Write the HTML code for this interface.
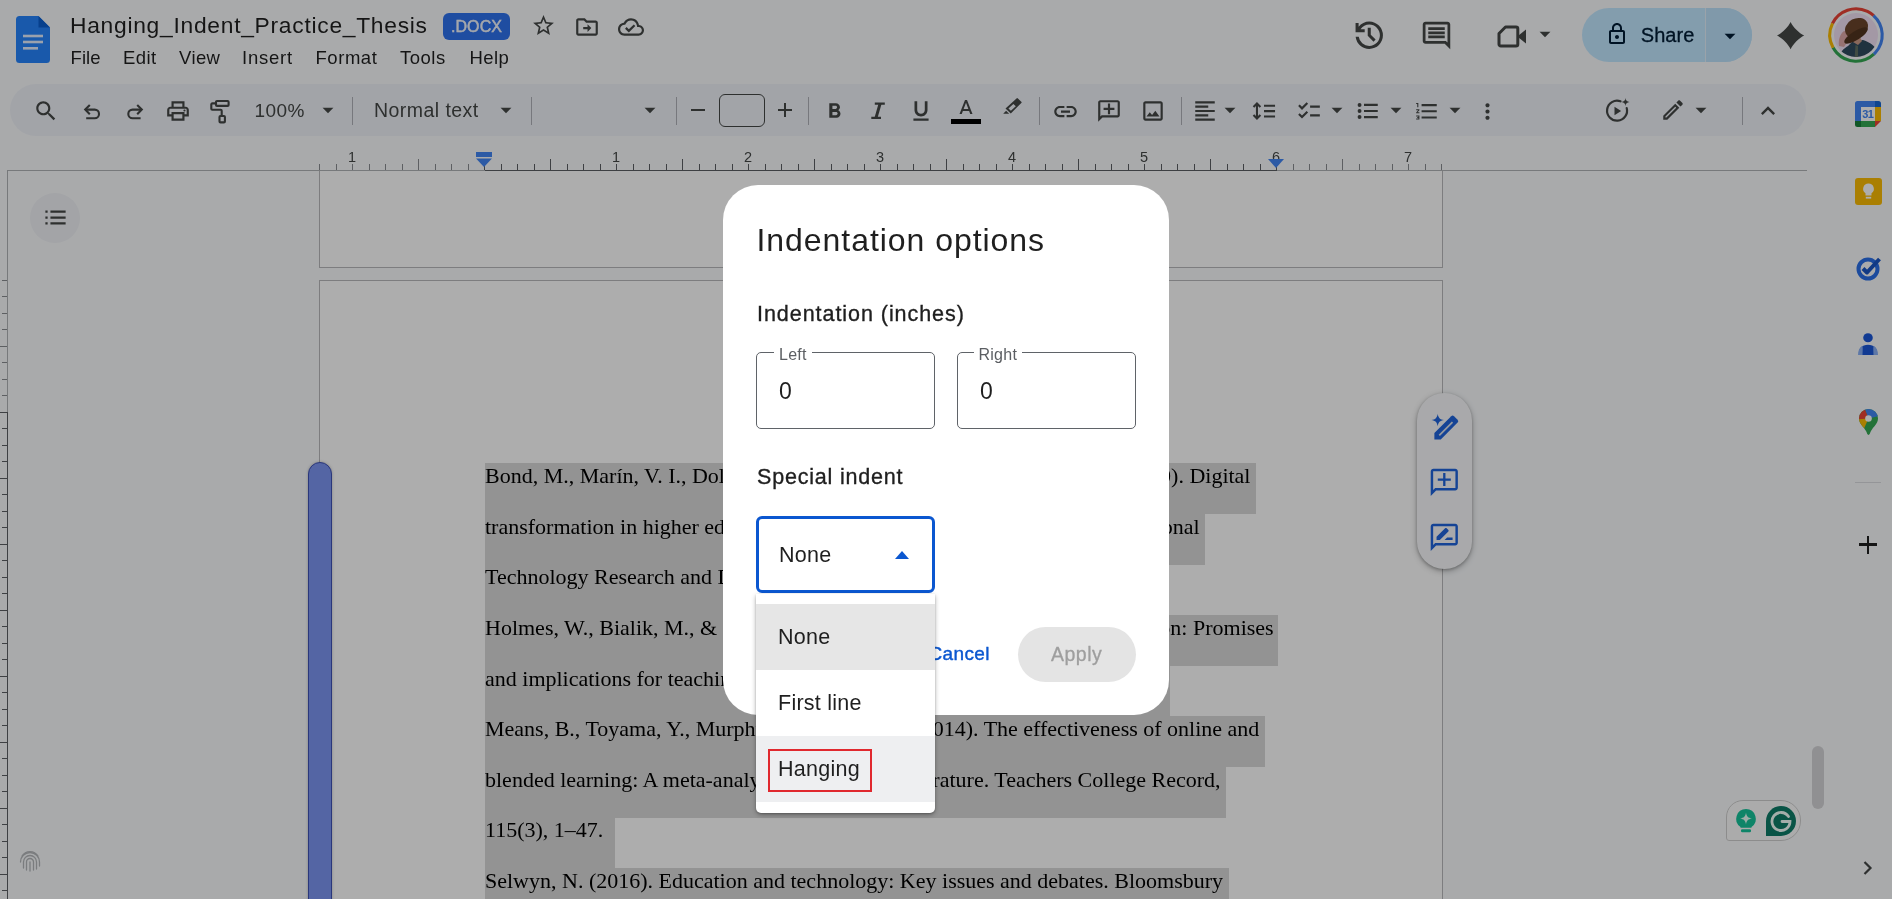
<!DOCTYPE html>
<html lang="en">
<head>
<meta charset="utf-8">
<title>Hanging_Indent_Practice_Thesis - Google Docs</title>
<style>
*{box-sizing:border-box;margin:0;padding:0}
html,body{width:1892px;height:899px;overflow:hidden}
body{position:relative;background:#f9fbfd;font-family:"Liberation Sans",sans-serif;color:#1f1f1f}
.abs{position:absolute}
svg{position:absolute;display:block;overflow:visible}
.ic{fill:#444746}
/* header */
#title{left:70px;top:10px;font-size:22.8px;line-height:30px;white-space:nowrap;color:#1f1f1f;letter-spacing:0.73px}
.menu{top:45.500px;font-size:18.5px;line-height:24px;white-space:nowrap;color:#1f1f1f;letter-spacing:0.4px}
#docx{left:443px;top:13px;width:67px;height:27px;border-radius:6px;background:#2f72ee;color:#f4f7fd;font-size:16px;-webkit-text-stroke:0.45px #f4f7fd;line-height:27px;text-align:center;letter-spacing:0.1px}
#share{left:1582px;top:8px;width:170px;height:54px;border-radius:27px;background:#c2e7ff;overflow:hidden}
#share .div{left:123px;top:0;width:1.300px;height:54px;background:#e4f1fb}
#share .r{left:124px;top:0;width:46px;height:54px;background:#bde2fb}
#share .t{left:58.700px;top:13.800px;font-size:20px;line-height:26px;color:#001d35;-webkit-text-stroke:0.3px #001d35;letter-spacing:0.1px}
/* toolbar */
#tb{left:10px;top:84px;width:1796px;height:52px;border-radius:26px;background:#eff2f8}
.sep{top:97px;width:1px;height:28px;background:#b0b2b8}
.tbt{top:97px;font-size:18.2px;line-height:24px;color:#444746;white-space:nowrap}
#fs{left:719px;top:94px;width:46px;height:33px;border:1.3px solid #444746;border-radius:6px}
/* rulers */
.rnum{top:148.500px;width:20px;text-align:center;font-size:14.500px;line-height:16px;color:#444746}
/* doc */
.page{background:#fff;border:1px solid #b9b9bc}
.hl{background:#d9d9d9}
.ln{font-family:"Liberation Serif",serif;font-size:22px;line-height:26px;color:#000;white-space:nowrap}
/* scrim */
#scrim{left:0;top:0;width:1892px;height:899px;background:rgba(0,0,0,0.32)}
/* dialog */
#dlg{left:723px;top:185px;width:446px;height:530px;border-radius:35px;background:#fff}
#dlg .h1{left:33.500px;top:34.800px;font-size:32px;line-height:40px;color:#1f1f1f;white-space:nowrap;letter-spacing:0.95px}
#dlg .h2{letter-spacing:0.95px;font-size:21.5px;line-height:26px;color:#1f1f1f;white-space:nowrap;-webkit-text-stroke:0.35px #1f1f1f}
.fld{width:179px;height:77px;border:1px solid #5f6368;border-radius:5px}
.fld .lb{top:-7.500px;left:17px;padding:0 5px;background:#fff;letter-spacing:0.25px;font-size:16px;line-height:18px;color:#5b5e62}
.fld .v{left:22px;top:26px;font-size:23px;line-height:24px;color:#1f1f1f}
#sel{left:33px;top:331px;width:179px;height:77px;border:3px solid #0b57d0;border-radius:6px}
.opt{font-size:21.5px;line-height:26px;color:#1f1f1f;white-space:nowrap;letter-spacing:0.25px}
#menu{left:756px;top:594px;width:179px;height:219px;background:#fff;border-radius:0 0 5px 5px;box-shadow:0 2px 5px rgba(0,0,0,.3),0 1px 2px rgba(0,0,0,.2)}
</style>
</head>
<body>
<div id="root" style="position:absolute;left:0;top:0;width:1892px;height:899px;will-change:transform">

<!-- ================= HEADER ================= -->
<div id="hdr">
  <div class="abs" id="title">Hanging_Indent_Practice_Thesis</div>
  <div class="abs" id="docx">.DOCX</div>
  <div class="abs menu" style="left:70.500px;letter-spacing:0.1px">File</div>
  <div class="abs menu" style="left:123px">Edit</div>
  <div class="abs menu" style="left:179px">View</div>
  <div class="abs menu" style="left:242px;letter-spacing:0.75px">Insert</div>
  <div class="abs menu" style="left:315.500px;letter-spacing:0.55px">Format</div>
  <div class="abs menu" style="left:400px;letter-spacing:0.5px">Tools</div>
  <div class="abs menu" style="left:469.500px">Help</div>
  
  <!-- docs logo -->
  <svg style="left:16px;top:16px" width="34" height="47" viewBox="0 0 34 47"><path d="M3.500 0H22.500l11.500 11.500v32a3.500 3.500 0 0 1-3.500 3.500h-27A3.500 3.500 0 0 1 0 43.500V3.500A3.500 3.500 0 0 1 3.500 0z" fill="#2684fc"/><path d="M22.500 0l11.500 11.500H22.500z" fill="#0b5fd0"/><rect x="7" y="18.700" width="20" height="2.600" fill="#e3eeff"/><rect x="7" y="24.700" width="20" height="2.600" fill="#e3eeff"/><rect x="7" y="31" width="15" height="2.600" fill="#e3eeff"/></svg>
  <!-- star -->
  <svg class="ic" style="left:530.500px;top:13px" width="25" height="25" viewBox="0 0 24 24"><path d="M22 9.240l-7.190-.620L12 2 9.190 8.630 2 9.240l5.460 4.730L5.820 21 12 17.270 18.180 21l-1.630-7.030L22 9.240zM12 15.400l-3.760 2.270 1-4.280-3.320-2.880 4.380-.380L12 6.100l1.710 4.040 4.380.380-3.320 2.880 1 4.280L12 15.400z"/></svg>
  <!-- move to folder -->
  <svg class="ic" style="left:574px;top:14px" width="26" height="26" viewBox="0 0 24 24"><path d="M20 6h-8l-2-2H4c-1.100 0-2 .900-2 2v12c0 1.100.900 2 2 2h16c1.100 0 2-.900 2-2V8c0-1.100-.900-2-2-2zm0 12H4V6h5.170l2 2H20v10zm-7.500-1.500l3.500-3.500-3.500-3.500v2.500H8.500v2h4v2.500z"/></svg>
  <!-- cloud done -->
  <svg class="ic" style="left:617.500px;top:13.500px" width="26" height="26" viewBox="0 0 24 24"><path d="M19.350 10.040C18.670 6.590 15.640 4 12 4 9.110 4 6.600 5.640 5.350 8.040 2.340 8.360 0 10.910 0 14c0 3.310 2.690 6 6 6h13c2.760 0 5-2.240 5-5 0-2.640-2.050-4.780-4.650-4.960zM19 18H6c-2.210 0-4-1.790-4-4 0-2.050 1.530-3.760 3.560-3.970l1.070-.110.500-.950C8.080 7.140 9.940 6 12 6c2.620 0 4.880 1.860 5.390 4.430l.300 1.500 1.530.110c1.560.100 2.780 1.410 2.780 2.960 0 1.650-1.350 3-3 3zm-9-3.820l-2.090-2.090L6.500 13.500 10 17l6.010-6.010-1.410-1.410z"/></svg>
  <!-- history -->
  <svg class="ic" style="left:1351.250px;top:16.850px" width="36.500" height="36.500" viewBox="0 -960 960 960"><path d="M480-120q-138 0-240.500-91.500T122-440h82q14 104 92.500 172T480-200q117 0 198.500-81.500T760-480q0-117-81.500-198.500T480-760q-69 0-129 32t-101 88h110v80H120v-240h80v94q51-64 124.500-99T480-840q75 0 140.500 28.500t114 77q48.500 48.500 77 114T840-480q0 75-28.500 140.500t-77 114q-48.500 48.500-114 77T480-120Zm112-192L440-464v-216h80v184l128 128-56 56Z"/></svg>
  <!-- comments -->
  <svg class="ic" style="left:1420px;top:19px" width="33" height="33" viewBox="0 0 24 24"><path d="M21.990 4c0-1.100-.890-2-1.990-2H4c-1.100 0-2 .900-2 2v12c0 1.100.900 2 2 2h14l4 4-.010-18zM20 4v13.170L18.830 16H4V4h16zM6 12h12v2H6zm0-3h12v2H6zm0-3h12v2H6z"/></svg>
  <!-- meet camera -->
  <svg style="left:1496.500px;top:24.500px" width="30" height="23" viewBox="0 0 30 23"><path d="M8.500 2H19a1.800 1.800 0 0 1 1.800 1.800v15.400A1.800 1.800 0 0 1 19 21H3.800A1.800 1.800 0 0 1 2 19.200V8.500z" fill="none" stroke="#444746" stroke-width="3" stroke-linejoin="round"/><path d="M21.500 10.500l7.500-6v14l-7.500-6z" fill="#444746"/></svg>
  <svg class="ic" style="left:1532px;top:21px" width="26" height="26" viewBox="0 0 24 24"><path d="M7 10l5 5 5-5z"/></svg>
  <!-- gemini spark -->
  <svg style="left:1776.700px;top:21.800px" width="27.200" height="27.200" viewBox="0 0 28 28"><path d="M14 0C16.500 5.200 22.800 11.500 28 14 22.800 16.500 16.500 22.800 14 28 11.500 22.800 5.200 16.500 0 14 5.200 11.500 11.500 5.200 14 0z" fill="#444746"/></svg>
  <!-- avatar -->
  <svg style="left:1828.300px;top:7.400px" width="56" height="56" viewBox="0 0 56 56">
    <g fill="none" stroke-width="3.100">
    <circle cx="28" cy="28" r="26.200" stroke="#ea4335" stroke-dasharray="48.500 200" transform="rotate(206 28 28)"/>
    <circle cx="28" cy="28" r="26.200" stroke="#4285f4" stroke-dasharray="43.400 200" transform="rotate(-48 28 28)"/>
    <circle cx="28" cy="28" r="26.200" stroke="#34a853" stroke-dasharray="47.500 200" transform="rotate(47 28 28)"/>
    <circle cx="28" cy="28" r="26.200" stroke="#fbbc04" stroke-dasharray="25.100 200" transform="rotate(151 28 28)"/>
    </g>
    <clipPath id="avc"><circle cx="28" cy="28" r="22"/></clipPath>
    <g clip-path="url(#avc)">
      <rect x="0" y="0" width="56" height="56" fill="#f0e0f4"/>
      <path d="M11 52c0-6 4-10 9-13l5-5 10-1c6 2 11 5 13 9v12z" fill="#2f4a5e"/>
      <path d="M25 35l5 3 4-4-2-4-6 1z" fill="#c99a86"/>
      <path d="M27.500 38l2.500 1v14h-3.500z" fill="#5f6f62"/>
      <path d="M11 39c-1-6 1-12 5-15l4 1 2 6c-2 3-4 6-6 9z" fill="#dfa9a8"/>
      <ellipse cx="28.500" cy="21" rx="12" ry="9.500" transform="rotate(-28 28.500 21)" fill="#6a452b"/>
      <ellipse cx="28" cy="28.500" rx="13.500" ry="4.500" transform="rotate(-32 28 28.500)" fill="#52341f"/>
    </g>
  </svg>

  <div class="abs" id="share">
    <div class="abs r"></div><div class="abs div"></div>
    <div class="abs t">Share</div>
    
    <svg style="left:23px;top:14.300px" width="24" height="24" viewBox="0 0 24 24"><path fill="#001d35" d="M18 8h-1V6c0-2.760-2.240-5-5-5S7 3.240 7 6v2H6c-1.100 0-2 .900-2 2v10c0 1.100.900 2 2 2h12c1.100 0 2-.900 2-2V10c0-1.100-.900-2-2-2zM9 6c0-1.660 1.340-3 3-3s3 1.340 3 3v2H9V6zm9 14H6V10h12v10zm-6-3c1.100 0 2-.900 2-2s-.900-2-2-2-2 .900-2 2 .900 2 2 2z"/></svg>
    <svg style="left:135px;top:15px" width="26" height="26" viewBox="0 0 24 24"><path fill="#001d35" d="M7 10l5 5 5-5z"/></svg>

  </div>
</div>

<!-- ================= TOOLBAR ================= -->
<div class="abs" id="tb"></div>
<div class="abs tbt" style="left:254.500px;top:99px;font-size:19px;letter-spacing:0.4px">100%</div>
<div class="abs tbt" style="left:374px;top:97.500px;font-size:19.500px;letter-spacing:0.45px">Normal text</div>
<div class="abs sep" style="left:352px"></div>
<div class="abs sep" style="left:531px"></div>
<div class="abs sep" style="left:676px"></div>
<div class="abs sep" style="left:808px"></div>
<div class="abs sep" style="left:1039px"></div>
<div class="abs sep" style="left:1181px"></div>
<div class="abs sep" style="left:1742px"></div>
<div class="abs" id="fs"></div>
<svg class="ic" style="left:32.500px;top:98px" width="26" height="26" viewBox="0 0 24 24"><path d="M15.500 14h-.790l-.280-.270C15.410 12.590 16 11.110 16 9.500 16 5.910 13.090 3 9.500 3S3 5.910 3 9.500 5.910 16 9.500 16c1.610 0 3.090-.590 4.230-1.570l.270.280v.790l5 4.990L20.490 19l-4.990-5zm-6 0C7.010 14 5 11.990 5 9.500S7.010 5 9.500 5 14 7.010 14 9.500 11.990 14 9.500 14z"/></svg>
<svg style="left:81px;top:101px" width="22" height="22" viewBox="0 0 22 22"><path d="M4.300 8.600H13.700a4.300 4.300 0 0 1 0 8.600H5.200" fill="none" stroke="#444746" stroke-width="2.100"/><path d="M8.800 3.900L4.200 8.600l4.600 4.700" fill="none" stroke="#444746" stroke-width="2.100"/></svg>
<svg style="left:124px;top:101px" width="22" height="22" viewBox="0 0 22 22"><path d="M17.700 8.600H8.600a4.300 4.300 0 0 0 0 8.600H16.600" fill="none" stroke="#444746" stroke-width="2.100"/><path d="M13.200 3.900l4.600 4.700-4.600 4.700" fill="none" stroke="#444746" stroke-width="2.100"/></svg>
<svg class="ic" style="left:165px;top:98px" width="26" height="26" viewBox="0 0 24 24"><circle cx="18" cy="11.500" r="1"/><path d="M19 8h-1V3H6v5H5c-1.660 0-3 1.340-3 3v6h4v4h12v-4h4v-6c0-1.660-1.340-3-3-3zM8 5h8v3H8V5zm8 14H8v-4h8v4zm4-4h-2v-2H6v2H4v-4c0-.550.450-1 1-1h14c.550 0 1 .450 1 1v4z"/></svg>
<svg style="left:208px;top:98px" width="24" height="27" viewBox="0 0 24 27" fill="none" stroke="#444746" stroke-width="2.100" stroke-linejoin="round"><rect x="8" y="3" width="12.600" height="4.900" rx="1"/><path d="M8 5.400H4.300a1 1 0 0 0-1 1v4.300a1 1 0 0 0 1 1h8.400a1 1 0 0 1 1 1V17.500"/><rect x="11.500" y="18" width="5.400" height="6.400" rx="1"/></svg>
<svg class="ic" style="left:315px;top:97px" width="26" height="26" viewBox="0 0 24 24"><path d="M7 10l5 5 5-5z"/></svg>
<svg class="ic" style="left:493px;top:97px" width="26" height="26" viewBox="0 0 24 24"><path d="M7 10l5 5 5-5z"/></svg>
<svg class="ic" style="left:637px;top:97px" width="26" height="26" viewBox="0 0 24 24"><path d="M7 10l5 5 5-5z"/></svg>
<div class="abs" style="left:691px;top:109px;width:14px;height:2px;background:#444746"></div>
<div class="abs" style="left:778px;top:109px;width:14px;height:2px;background:#444746"></div><div class="abs" style="left:784px;top:103px;width:2px;height:14px;background:#444746"></div>
<svg class="ic" style="left:821.700px;top:98.800px" width="25" height="25" viewBox="0 0 24 24"><path d="M15.600 10.790c.970-.670 1.650-1.770 1.650-2.790 0-2.260-1.750-4-4-4H7v14h7.040c2.090 0 3.710-1.700 3.710-3.790 0-1.520-.860-2.820-2.150-3.420zM10 6.500h3c.830 0 1.500.670 1.500 1.500s-.670 1.500-1.500 1.500h-3v-3zm3.500 9H10v-3h3.500c.830 0 1.500.670 1.500 1.500s-.670 1.500-1.500 1.500z"/></svg>
<svg style="left:868px;top:100px" width="20" height="22" viewBox="0 0 20 22" fill="none" stroke="#444746" stroke-width="2.300"><path d="M6.800 3.600H16.800M3.300 17.900H13"/><path d="M12.100 3.600L8 17.900" stroke-width="3"/></svg>
<svg class="ic" style="left:908px;top:97.500px" width="26" height="26" viewBox="0 0 24 24"><path d="M12 17c3.310 0 6-2.690 6-6V3h-2.500v8c0 1.930-1.570 3.500-3.500 3.500S8.500 12.930 8.500 11V3H6v8c0 3.310 2.690 6 6 6zm-7 2v2h14v-2H5z"/></svg>
<svg class="ic" style="left:954px;top:96.500px" width="24" height="24" viewBox="0 0 24 24"><path d="M11 3L5.500 17h2.250l1.120-3h6.250l1.120 3h2.250L13 3h-2zm-1.380 9L12 5.670 14.380 12H9.620z"/></svg>
<div class="abs" style="left:951px;top:119px;width:30px;height:5px;background:#000"></div>
<svg class="ic" style="left:1001px;top:96px" width="24" height="22" viewBox="0 0 24 22"><path fill-rule="evenodd" d="M4.500 12.500L15.500 2.400a1 1 0 0 1 1.400 0l3.400 3.300a1 1 0 0 1 0 1.400L9.800 17.500zM7.450 12.460L12.370 7.960l2.440 2.300L9.890 14.760z"/><path d="M5.100 14.700L2.200 17.800h6z"/></svg>
<svg class="ic" style="left:1052px;top:97.5px" width="27" height="27" viewBox="0 0 24 24"><path d="M3.900 12c0-1.710 1.390-3.100 3.100-3.100h4V7H7c-2.760 0-5 2.240-5 5s2.240 5 5 5h4v-1.900H7c-1.710 0-3.100-1.390-3.100-3.100zM8 13h8v-2H8v2zm9-6h-4v1.900h4c1.710 0 3.100 1.390 3.100 3.100s-1.390 3.100-3.100 3.100h-4V17h4c2.760 0 5-2.240 5-5s-2.240-5-5-5z"/></svg>
<svg class="ic" style="left:1096px;top:98px" width="26" height="26" viewBox="0 0 24 24"><g transform="translate(24 0) scale(-1 1)"><path d="M22 4c0-1.100-.900-2-2-2H4c-1.100 0-2 .900-2 2v12c0 1.100.900 2 2 2h14l4 4V4zm-2 13.170L18.830 16H4V4h16v13.170zM13 5h-2v4H7v2h4v4h2v-4h4V9h-4z"/></g></svg>
<svg class="ic" style="left:1140px;top:98px" width="26" height="26" viewBox="0 0 24 24"><path d="M19 5v14H5V5h14m0-2H5c-1.100 0-2 .900-2 2v14c0 1.100.900 2 2 2h14c1.100 0 2-.900 2-2V5c0-1.100-.900-2-2-2zm-4.860 8.860l-3 3.870L9 13.140 6 17h12l-3.860-5.140z"/></svg>
<svg class="ic" style="left:1192px;top:98px" width="26" height="26" viewBox="0 0 24 24"><path d="M15 15H3v2h12v-2zm0-8H3v2h12V7zM3 13h18v-2H3v2zm0 8h18v-2H3v2zM3 3v2h18V3H3z"/></svg>
<svg class="ic" style="left:1217px;top:97px" width="26" height="26" viewBox="0 0 24 24"><path d="M7 10l5 5 5-5z"/></svg>
<svg style="left:1251px;top:98px" width="26" height="26" viewBox="0 0 24 24" fill="none" stroke="#444746" stroke-width="1.900"><path d="M5.500 5.200v13.600M2.300 8.300L5.500 5.100l3.200 3.200M2.300 15.700l3.200 3.200 3.200-3.200M12 7.200h10.200M12 12.100h10.200M12 17h10.200"/></svg>
<svg class="ic" style="left:1296px;top:98px" width="26" height="26" viewBox="0 0 24 24"><path d="M22 7h-9v2h9V7zm0 8h-9v2h9v-2zM5.540 11L2 7.460l1.410-1.410 2.120 2.120 4.240-4.240 1.410 1.410L5.540 11zm0 8L2 15.460l1.410-1.410 2.120 2.120 4.240-4.240 1.410 1.410L5.540 19z"/></svg>
<svg class="ic" style="left:1324px;top:97px" width="26" height="26" viewBox="0 0 24 24"><path d="M7 10l5 5 5-5z"/></svg>
<svg class="ic" style="left:1354.500px;top:98px" width="26" height="26" viewBox="0 0 24 24"><circle cx="4.200" cy="6.400" r="1.800"/><circle cx="4.200" cy="12" r="1.800"/><circle cx="4.200" cy="17.600" r="1.800"/><path d="M8.300 5.400H21v2H8.300zM8.300 11H21v2H8.300zM8.300 16.600H21v2H8.300z"/></svg>
<svg class="ic" style="left:1383px;top:97px" width="26" height="26" viewBox="0 0 24 24"><path d="M7 10l5 5 5-5z"/></svg>
<svg class="ic" style="left:1414px;top:98.700px" width="26" height="24.600" viewBox="0 0 24 24" preserveAspectRatio="none"><path d="M2 17h2v.500H3v1h1v.500H2v1h3v-4H2v1zm1-9h1V4H2v1h1v3zm-1 3h1.800L2 13.100v.900h3v-1H3.200L5 10.900V10H2v1zm5-6v2h14V5H7zm0 14h14v-2H7v2zm0-6h14v-2H7v2z"/></svg>
<svg class="ic" style="left:1442px;top:97px" width="26" height="26" viewBox="0 0 24 24"><path d="M7 10l5 5 5-5z"/></svg>
<svg class="ic" style="left:1474.5px;top:98.5px" width="25" height="25" viewBox="0 0 24 24"><path d="M12 8c1.100 0 2-.900 2-2s-.900-2-2-2-2 .900-2 2 .900 2 2 2zm0 2c-1.100 0-2 .900-2 2s.900 2 2 2 2-.900 2-2-.900-2-2-2zm0 6c-1.100 0-2 .900-2 2s.900 2 2 2 2-.900 2-2-.900-2-2-2z"/></svg>
<svg style="left:1605px;top:98px" width="26" height="25" viewBox="0 0 26 25"><path d="M15.500 3.300A10 10 0 1 0 21.700 10" fill="none" stroke="#444746" stroke-width="2.200" stroke-linecap="round"/><path d="M9.500 8.800v8.400l6.600-4.200z" fill="#444746"/><path d="M20.500 0c.300 2.600 1.400 3.700 4 4-2.600.300-3.700 1.400-4 4-.300-2.600-1.400-3.700-4-4 2.600-.300 3.700-1.400 4-4z" fill="#444746"/></svg>
<svg class="ic" style="left:1660px;top:97px" width="26" height="26" viewBox="0 0 24 24"><path d="M14.060 9.020l.920.920L5.920 19H5v-.920l9.060-9.060M17.660 3c-.250 0-.510.100-.700.290l-1.830 1.830 3.750 3.750 1.830-1.830c.390-.390.390-1.020 0-1.410l-2.340-2.340c-.200-.200-.450-.290-.710-.290zm-3.600 3.190L3 17.250V21h3.750L17.810 9.940l-3.750-3.750z"/></svg>
<svg class="ic" style="left:1688px;top:97px" width="26" height="26" viewBox="0 0 24 24"><path d="M7 10l5 5 5-5z"/></svg>
<svg class="ic" style="left:1754px;top:97px" width="28" height="28" viewBox="0 0 24 24"><path d="M12 8l-6 6 1.410 1.410L12 10.830l4.590 4.580L18 14z"/></svg>


<!-- ================= RULERS ================= -->
<svg style="left:0;top:140px" width="1892" height="760" viewBox="0 140 1892 760" shape-rendering="crispEdges">
<rect x="7" y="170" width="1800" height="1" fill="#b0b3b6"/>
<rect x="484.5" y="170" width="792" height="1" fill="#5c5f63"/>
<rect x="319" y="164" width="1" height="6" fill="#8a8d91"/><rect x="335.5" y="164" width="1" height="6" fill="#8a8d91"/><rect x="352" y="164" width="1" height="6" fill="#8a8d91"/><rect x="368.5" y="164" width="1" height="6" fill="#8a8d91"/><rect x="385" y="164" width="1" height="6" fill="#8a8d91"/><rect x="401.5" y="164" width="1" height="6" fill="#8a8d91"/><rect x="418" y="158.5" width="1" height="11.5" fill="#8a8d91"/><rect x="434.5" y="164" width="1" height="6" fill="#8a8d91"/><rect x="451" y="164" width="1" height="6" fill="#8a8d91"/><rect x="467.5" y="164" width="1" height="6" fill="#8a8d91"/><rect x="484" y="164" width="1" height="6" fill="#5c5f63"/><rect x="500.5" y="164" width="1" height="6" fill="#5c5f63"/><rect x="517" y="164" width="1" height="6" fill="#5c5f63"/><rect x="533.5" y="164" width="1" height="6" fill="#5c5f63"/><rect x="550" y="158.5" width="1" height="11.5" fill="#5c5f63"/><rect x="566.5" y="164" width="1" height="6" fill="#5c5f63"/><rect x="583" y="164" width="1" height="6" fill="#5c5f63"/><rect x="599.5" y="164" width="1" height="6" fill="#5c5f63"/><rect x="616" y="164" width="1" height="6" fill="#5c5f63"/><rect x="632.5" y="164" width="1" height="6" fill="#5c5f63"/><rect x="649" y="164" width="1" height="6" fill="#5c5f63"/><rect x="665.5" y="164" width="1" height="6" fill="#5c5f63"/><rect x="682" y="158.5" width="1" height="11.5" fill="#5c5f63"/><rect x="698.5" y="164" width="1" height="6" fill="#5c5f63"/><rect x="715" y="164" width="1" height="6" fill="#5c5f63"/><rect x="731.5" y="164" width="1" height="6" fill="#5c5f63"/><rect x="748" y="164" width="1" height="6" fill="#5c5f63"/><rect x="764.5" y="164" width="1" height="6" fill="#5c5f63"/><rect x="781" y="164" width="1" height="6" fill="#5c5f63"/><rect x="797.5" y="164" width="1" height="6" fill="#5c5f63"/><rect x="814" y="158.5" width="1" height="11.5" fill="#5c5f63"/><rect x="830.5" y="164" width="1" height="6" fill="#5c5f63"/><rect x="847" y="164" width="1" height="6" fill="#5c5f63"/><rect x="863.5" y="164" width="1" height="6" fill="#5c5f63"/><rect x="880" y="164" width="1" height="6" fill="#5c5f63"/><rect x="896.5" y="164" width="1" height="6" fill="#5c5f63"/><rect x="913" y="164" width="1" height="6" fill="#5c5f63"/><rect x="929.5" y="164" width="1" height="6" fill="#5c5f63"/><rect x="946" y="158.5" width="1" height="11.5" fill="#5c5f63"/><rect x="962.5" y="164" width="1" height="6" fill="#5c5f63"/><rect x="979" y="164" width="1" height="6" fill="#5c5f63"/><rect x="995.5" y="164" width="1" height="6" fill="#5c5f63"/><rect x="1012" y="164" width="1" height="6" fill="#5c5f63"/><rect x="1028.5" y="164" width="1" height="6" fill="#5c5f63"/><rect x="1045" y="164" width="1" height="6" fill="#5c5f63"/><rect x="1061.5" y="164" width="1" height="6" fill="#5c5f63"/><rect x="1078" y="158.5" width="1" height="11.5" fill="#5c5f63"/><rect x="1094.5" y="164" width="1" height="6" fill="#5c5f63"/><rect x="1111" y="164" width="1" height="6" fill="#5c5f63"/><rect x="1127.5" y="164" width="1" height="6" fill="#5c5f63"/><rect x="1144" y="164" width="1" height="6" fill="#5c5f63"/><rect x="1160.5" y="164" width="1" height="6" fill="#5c5f63"/><rect x="1177" y="164" width="1" height="6" fill="#5c5f63"/><rect x="1193.5" y="164" width="1" height="6" fill="#5c5f63"/><rect x="1210" y="158.5" width="1" height="11.5" fill="#5c5f63"/><rect x="1226.5" y="164" width="1" height="6" fill="#5c5f63"/><rect x="1243" y="164" width="1" height="6" fill="#5c5f63"/><rect x="1259.5" y="164" width="1" height="6" fill="#5c5f63"/><rect x="1276" y="164" width="1" height="6" fill="#5c5f63"/><rect x="1292.5" y="164" width="1" height="6" fill="#8a8d91"/><rect x="1309" y="164" width="1" height="6" fill="#8a8d91"/><rect x="1325.5" y="164" width="1" height="6" fill="#8a8d91"/><rect x="1342" y="158.5" width="1" height="11.5" fill="#8a8d91"/><rect x="1358.5" y="164" width="1" height="6" fill="#8a8d91"/><rect x="1375" y="164" width="1" height="6" fill="#8a8d91"/><rect x="1391.5" y="164" width="1" height="6" fill="#8a8d91"/><rect x="1408" y="164" width="1" height="6" fill="#8a8d91"/><rect x="1424.5" y="164" width="1" height="6" fill="#8a8d91"/><rect x="1441" y="164" width="1" height="6" fill="#8a8d91"/>
<rect x="7" y="170" width="1" height="242" fill="#b0b3b6"/><rect x="7" y="412" width="1" height="490" fill="#5c5f63"/>
<rect x="1.5" y="279.8" width="5.5" height="1" fill="#8a8d91"/><rect x="1.5" y="296.3" width="5.5" height="1" fill="#8a8d91"/><rect x="1.5" y="312.8" width="5.5" height="1" fill="#8a8d91"/><rect x="1.5" y="329.3" width="5.5" height="1" fill="#8a8d91"/><rect x="0" y="345.8" width="7" height="1" fill="#8a8d91"/><rect x="1.5" y="362.3" width="5.5" height="1" fill="#8a8d91"/><rect x="1.5" y="378.8" width="5.5" height="1" fill="#8a8d91"/><rect x="1.5" y="395.3" width="5.5" height="1" fill="#8a8d91"/><rect x="0" y="411.8" width="7" height="1" fill="#5c5f63"/><rect x="1.5" y="428.3" width="5.5" height="1" fill="#5c5f63"/><rect x="1.5" y="444.8" width="5.5" height="1" fill="#5c5f63"/><rect x="1.5" y="461.3" width="5.5" height="1" fill="#5c5f63"/><rect x="0" y="477.8" width="7" height="1" fill="#5c5f63"/><rect x="1.5" y="494.3" width="5.5" height="1" fill="#5c5f63"/><rect x="1.5" y="510.8" width="5.5" height="1" fill="#5c5f63"/><rect x="1.5" y="527.3" width="5.5" height="1" fill="#5c5f63"/><rect x="0" y="543.8" width="7" height="1" fill="#5c5f63"/><rect x="1.5" y="560.3" width="5.5" height="1" fill="#5c5f63"/><rect x="1.5" y="576.8" width="5.5" height="1" fill="#5c5f63"/><rect x="1.5" y="593.3" width="5.5" height="1" fill="#5c5f63"/><rect x="0" y="609.8" width="7" height="1" fill="#5c5f63"/><rect x="1.5" y="626.3" width="5.5" height="1" fill="#5c5f63"/><rect x="1.5" y="642.8" width="5.5" height="1" fill="#5c5f63"/><rect x="1.5" y="659.3" width="5.5" height="1" fill="#5c5f63"/><rect x="0" y="675.8" width="7" height="1" fill="#5c5f63"/><rect x="1.5" y="692.3" width="5.5" height="1" fill="#5c5f63"/><rect x="1.5" y="708.8" width="5.5" height="1" fill="#5c5f63"/><rect x="1.5" y="725.3" width="5.5" height="1" fill="#5c5f63"/><rect x="0" y="741.8" width="7" height="1" fill="#5c5f63"/><rect x="1.5" y="758.3" width="5.5" height="1" fill="#5c5f63"/><rect x="1.5" y="774.8" width="5.5" height="1" fill="#5c5f63"/><rect x="1.5" y="791.3" width="5.5" height="1" fill="#5c5f63"/><rect x="0" y="807.8" width="7" height="1" fill="#5c5f63"/><rect x="1.5" y="824.3" width="5.5" height="1" fill="#5c5f63"/><rect x="1.5" y="840.8" width="5.5" height="1" fill="#5c5f63"/><rect x="1.5" y="857.3" width="5.5" height="1" fill="#5c5f63"/><rect x="0" y="873.8" width="7" height="1" fill="#5c5f63"/><rect x="1.5" y="890.3" width="5.5" height="1" fill="#5c5f63"/>
</svg>
<div class="abs rnum" style="left:342px">1</div><div class="abs rnum" style="left:606px">1</div><div class="abs rnum" style="left:738px">2</div><div class="abs rnum" style="left:870px">3</div><div class="abs rnum" style="left:1002px">4</div><div class="abs rnum" style="left:1134px">5</div><div class="abs rnum" style="left:1266px">6</div><div class="abs rnum" style="left:1398px">7</div>
<svg style="left:476px;top:152px" width="16" height="16" viewBox="0 0 16 16"><rect x="0" y="0" width="16" height="5" fill="#4285f4"/><path d="M0 6.500h16L8 15z" fill="#4285f4"/></svg>
<svg style="left:1268px;top:159px" width="16" height="9" viewBox="0 0 16 9"><path d="M0 0h16L8 9z" fill="#4285f4"/></svg>


<!-- ================= DOCUMENT ================= -->
<div class="abs page" style="left:319px;top:171px;width:1124px;height:97px;border-top:none"></div>
<div class="abs page" style="left:319px;top:280px;width:1124px;height:700px"></div>
<div class="abs hl" style="left:485px;top:463px;width:771px;height:51px"></div>
<div class="abs hl" style="left:485px;top:514px;width:720px;height:51px"></div>
<div class="abs hl" style="left:485px;top:565px;width:665px;height:50px"></div>
<div class="abs hl" style="left:485px;top:615px;width:793px;height:51px"></div>
<div class="abs hl" style="left:485px;top:666px;width:685px;height:50px"></div>
<div class="abs hl" style="left:485px;top:716px;width:780px;height:51px"></div>
<div class="abs hl" style="left:485px;top:767px;width:741px;height:51px"></div>
<div class="abs hl" style="left:485px;top:818px;width:130px;height:50px"></div>
<div class="abs hl" style="left:485px;top:868px;width:744px;height:51px"></div>
<div class="abs ln" id="L1" style="left:485px;top:463.2px">Bond, M., Marín, V. I., Dolch, C., Bedenlier, S., &amp; Zawacki-Richter, O. (2020). Digital</div>
<div class="abs ln" id="L2" style="left:485px;top:513.8px">transformation in higher education: A systematic <span style="margin-left:2.9px">review</span> of the field. Educational</div>
<div class="abs ln" id="L3" style="left:485px;top:564.4px">Technology Research and Development, 68(2), 1–30.</div>
<div class="abs ln" id="L4" style="left:485px;top:615.0px">Holmes, W., Bialik, M., &amp; Fadel, C. (2019). <span style="margin-left:1px">Artificial</span> intelligence in education: Promises</div>
<div class="abs ln" id="L5" style="left:485px;top:665.6px">and implications for teaching and learning. Center for Curriculum Redesign.</div>
<div class="abs ln" id="L6" style="left:485px;top:716.2px">Means, B., Toyama, Y., Murphy, R., &amp; <span style="margin-left:1.3px">Baki</span>, M. (2014). The effectiveness of online and</div>
<div class="abs ln" id="L7" style="left:485px;top:766.8px">blended learning: A meta-analysis of <span style="margin-left:2.6px">empirical</span> literature. Teachers College Record,</div>
<div class="abs ln" id="L8" style="left:485px;top:817.4px">115(3), 1–47.</div>
<div class="abs ln" id="L9" style="left:485px;top:868.0px">Selwyn, N. (2016). Education and technology: Key issues and debates. Bloomsbury</div>
<div class="abs" style="left:308px;top:462px;width:24px;height:460px;border-radius:12px;background:#7c95f2;border:1px solid #3f51b5;box-shadow:0 0 3px rgba(0,0,0,.25)"></div>
<div class="abs" style="left:30px;top:192.500px;width:50px;height:50px;border-radius:25px;background:#f0f2f6"></div>
<svg class="ic" style="left:41.700px;top:204.200px" width="27" height="27" viewBox="0 0 24 24"><path d="M3 7.800h2v-2H3v2zm0 5.200h2v-2H3v2zm0 5.200h2v-2H3v2zM7.500 5.800v2H21v-2H7.500zm0 7.200H21v-2H7.500v2zm0 5.200H21v-2H7.500v2z"/></svg>


<!-- ================= SIDE ================= -->

<!-- floating action pill -->
<div class="abs" style="left:1417px;top:393px;width:55px;height:176px;border-radius:28px;background:#f9fafc;box-shadow:0 2px 6px rgba(0,0,0,.3),0 1px 3px rgba(0,0,0,.2)"></div>
<svg style="left:1430.500px;top:413px" width="29" height="28" viewBox="0 0 29 28"><path d="M6.700 .700c.500 4 2.300 5.800 6.300 6.300-4 .500-5.800 2.300-6.300 6.300-.500-4-2.300-5.800-6.300-6.300 4-.500 5.800-2.300 6.300-6.300z" fill="#1f64dc"/><path d="M3.400 20V26.400H9.800L26.600 9.600a2 2 0 0 0 0-2.800L23 3.200a2 2 0 0 0-2.800 0z" fill="#1f64dc"/><path d="M8.300 22.300L21.500 9.100" stroke="#dfe3ea" stroke-width="1.700" fill="none"/></svg>
<svg style="left:1428.400px;top:466.200px" width="32.600" height="32.600" viewBox="0 0 24 24"><g transform="translate(24 0) scale(-1 1)"><path fill="#1f64dc" d="M22 4c0-1.100-.900-2-2-2H4c-1.100 0-2 .900-2 2v12c0 1.100.900 2 2 2h14l4 4V4zm-1.800 13.600L18.700 16.200H3.800V3.800h16.400v13.800zM12.850 5.200h-1.700v4H7.200v1.700h3.950v3.900h1.700v-3.900h3.950V9.200h-3.950z"/></g></svg>
<svg style="left:1428.400px;top:520.600px" width="32.600" height="32.600" viewBox="0 0 24 24"><g transform="translate(24 0) scale(-1 1)"><path fill="#1f64dc" d="M22 4c0-1.100-.900-2-2-2H4c-1.100 0-2 .900-2 2v12c0 1.100.900 2 2 2h14l4 4V4zm-1.800 13.600L18.700 16.200H3.800V3.800h16.400v13.800z"/></g><path fill="#1f64dc" d="M6.300 14v-2.400l6.300-6.300c.300-.300.800-.300 1.100 0l1.300 1.300c.300.300.300.800 0 1.100L8.700 14H6.300zm5.900 0l1.900-1.900h4V14h-5.900z"/></svg>

<!-- side panel -->
<!-- calendar -->
<svg style="left:1854.500px;top:101px" width="26" height="26" viewBox="0 0 26 26"><path d="M0 20V2.500A2.500 2.500 0 0 1 2.500 0H20v6H6v14z" fill="#4285f4"/><path d="M20 0h3.500A2.500 2.500 0 0 1 26 2.500V6h-6z" fill="#1967d2"/><path d="M20 6h6v14h-6z" fill="#fbbc04"/><path d="M6 20h14v6H6z" fill="#34a853"/><path d="M0 20h6v6H2.500A2.500 2.500 0 0 1 0 23.500z" fill="#188038"/><path d="M20 20h6l-6 6z" fill="#ea4335"/><rect x="6" y="6" width="14" height="14" fill="#fff"/><text x="12.800" y="17.400" text-anchor="middle" font-family="Liberation Sans, sans-serif" font-weight="bold" font-size="11" fill="#4285f4" letter-spacing="-0.6">31</text></svg>
<!-- keep -->
<svg style="left:1854.500px;top:177.500px" width="27" height="27" viewBox="0 0 27 27"><rect width="27" height="27" rx="3" fill="#fbbc04"/><path d="M13.500 5.500a5.300 5.300 0 0 0-3 9.700v2.300h6v-2.300a5.300 5.300 0 0 0-3-9.700z" fill="#fff"/><rect x="10.800" y="18.800" width="5.400" height="1.800" fill="#fff"/></svg>
<!-- tasks -->
<svg style="left:1856px;top:255px" width="26" height="26" viewBox="0 0 26 26"><circle cx="12" cy="14" r="9.500" fill="none" stroke="#2a6fe8" stroke-width="4"/><path d="M7 13.500l4 4L23.500 4" fill="none" stroke="#1a56c4" stroke-width="4" stroke-linejoin="round"/></svg>
<!-- contacts -->
<svg style="left:1858px;top:333px" width="20" height="22.600" preserveAspectRatio="none" viewBox="0 0 20 24"><circle cx="10" cy="5" r="4.800" fill="#1a56d8"/><path d="M1 23.500c-1-7 3-11 9-11s10 4 9 11z" fill="#1a56d8"/><path d="M0 23.500c0-5 1.500-8.500 4.500-10 .5 4 0 7 0 10z" fill="#8ab0f5"/><path d="M20 23.500c0-5-1.500-8.500-4.500-10-.5 4 0 7 0 10z" fill="#8ab0f5"/></svg>
<!-- maps -->
<svg style="left:1858.500px;top:409px" width="19" height="26" viewBox="0 0 19 26"><clipPath id="pin"><path d="M9.500 0A9.500 9.500 0 0 0 0 9.500c0 5 4.500 8 7 12.500.900 1.700 1.400 4 2.500 4s1.600-2.300 2.500-4c2.500-4.500 7-7.500 7-12.500A9.500 9.500 0 0 0 9.500 0z"/></clipPath><g clip-path="url(#pin)"><rect x="-1" y="-1" width="21" height="28" fill="#34a853"/><path d="M9.500 9.500L4.500-3H22V6.500z" fill="#4285f4"/><path d="M9.500 9.500L4.500-3H-3V10.500z" fill="#ea4335"/><path d="M9.500 9.500L-3 10.500V22l8-2.500z" fill="#fbbc04"/><circle cx="9.500" cy="9.500" r="3.300" fill="#fff"/></g></svg>
<div class="abs" style="left:1855px;top:482px;width:26px;height:1px;background:#dadce0"></div>
<!-- plus -->
<div class="abs" style="left:1859px;top:543.300px;width:18px;height:2.400px;background:#1f1f1f"></div><div class="abs" style="left:1866.800px;top:535.500px;width:2.400px;height:18px;background:#1f1f1f"></div>
<!-- chevron right -->
<svg style="left:1863px;top:861px" width="10" height="14" viewBox="0 0 10 14"><path d="M1.500 1l6 6-6 6" fill="none" stroke="#444746" stroke-width="2.200"/></svg>
<!-- scrollbar thumb -->
<div class="abs" style="left:1812px;top:746px;width:12px;height:63px;border-radius:6px;background:#d5d5d7"></div>
<!-- grammarly widget -->
<div class="abs" style="left:1726px;top:800px;width:75px;height:41px;border-radius:17px 20px 20px 3px;background:#fdfdfd;border:1.300px solid #cfcfcf"></div>
<svg style="left:1735.500px;top:809px" width="20" height="24" viewBox="0 0 20 24"><path d="M10 0a9.800 9.800 0 0 0-5.500 17.900v.9h11v-.9A9.800 9.800 0 0 0 10 0z" fill="#15c39a"/><rect x="5" y="20.300" width="10" height="3" rx="1.200" fill="#15c39a"/><path d="M10 3.500c.600 4 2 5.400 6 6-4 .600-5.400 2-6 6-.600-4-2-5.400-6-6 4-.600 5.400-2 6-6z" fill="#e8fff8"/></svg>
<svg style="left:1765.500px;top:806px" width="30" height="30" viewBox="0 0 30 30"><path d="M15 0a15 15 0 0 1 0 30H0V15A15 15 0 0 1 15 0z" fill="#0e7c68"/><path d="M22.500 10.500A9 9 0 1 0 24 15.500h-8" fill="none" stroke="#f2fffb" stroke-width="2.800" stroke-linecap="round"/></svg>
<!-- fingerprint -->
<svg style="left:19px;top:848px" width="22" height="24" viewBox="0 0 22 24" fill="none" stroke="#b4b7ba" stroke-width="1.300" stroke-linecap="round"><path d="M3 8a9.500 9.500 0 0 1 16 0"/><path d="M1.500 14a9.500 9.500 0 0 1 19 0v4"/><path d="M4.500 20v-6a6.500 6.500 0 0 1 13 0v7"/><path d="M7.500 22v-8a3.500 3.500 0 0 1 7 0v8"/><path d="M11 14v9"/></svg>


<div class="abs" id="scrim"></div>

<!-- ================= DIALOG ================= -->
<div class="abs" id="dlg">
  <div class="abs h1">Indentation options</div>
  <div class="abs h2" style="left:34px;top:115.700px">Indentation (inches)</div>
  <div class="abs fld" style="left:33px;top:167px"><div class="abs lb">Left</div><div class="abs v">0</div></div>
  <div class="abs fld" style="left:234px;top:167px"><div class="abs lb" style="left:15.500px">Right</div><div class="abs v">0</div></div>
  <div class="abs h2" style="left:34px;top:279px;letter-spacing:0.8px">Special indent</div>
  <div class="abs" id="sel">
    <div class="abs opt" style="left:20px;top:22.500px">None</div>
    <svg style="left:136px;top:32px" width="14" height="8" viewBox="0 0 14 8"><path d="M0 8L7 0l7 8z" fill="#0b57d0"/></svg>
  </div>
  <div class="abs" style="left:205.400px;top:457px;letter-spacing:0.4px;font-size:19px;line-height:24px;color:#0b57d0;-webkit-text-stroke:0.4px #0b57d0;white-space:nowrap">Cancel</div>
  <div class="abs" style="left:295px;top:442px;width:118px;height:55px;border-radius:28px;background:#e4e4e4"></div>
  <div class="abs" style="left:328px;top:457px;font-size:19.5px;letter-spacing:0.5px;line-height:24px;color:#9e9e9e;-webkit-text-stroke:0.3px #9e9e9e;white-space:nowrap">Apply</div>
</div>
<div class="abs" id="menu">
  <div class="abs" style="left:0;top:10px;width:179px;height:66px;background:#e6e6e6"></div>
  <div class="abs" style="left:0;top:142px;width:179px;height:66px;background:#eeeff1"></div>
  <div class="abs opt" style="left:22px;top:30px">None</div>
  <div class="abs opt" style="left:22px;top:96px">First line</div>
  <div class="abs opt" style="left:22px;top:162px">Hanging</div>
  <div class="abs" style="left:12px;top:155px;width:104px;height:43px;border:2px solid #e0282e"></div>
</div>

</div>
</body>
</html>
